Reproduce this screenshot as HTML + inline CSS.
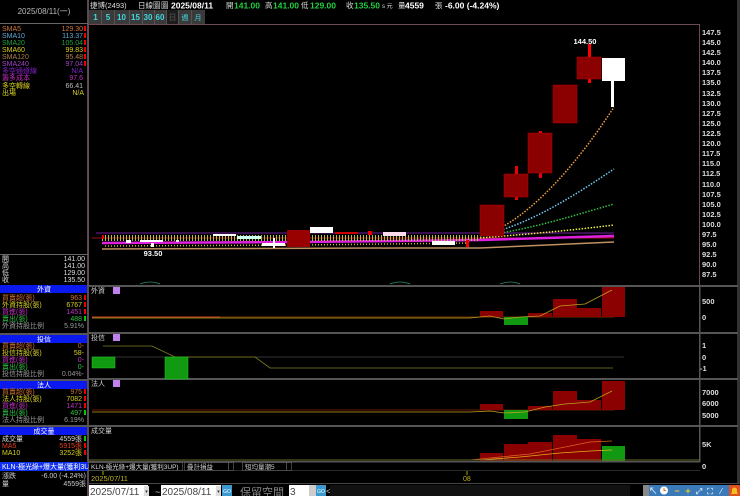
<!DOCTYPE html>
<html><head><meta charset="utf-8"><style>
html,body{margin:0;padding:0;background:#000;width:740px;height:496px;overflow:hidden}
svg{display:block}
text{font-family:"Liberation Sans","Noto Sans CJK TC",sans-serif}
</style></head><body>
<svg width="740" height="496" viewBox="0 0 740 496" xmlns="http://www.w3.org/2000/svg">
<rect width="740" height="496" fill="#000"/>
<!-- left panel separators -->
<rect x="87" y="0" width="2" height="496" fill="#5a4a55"/>
<rect x="0" y="23" width="88" height="1" fill="#666"/>
<text x="44" y="14" font-size="8" fill="#bbb" text-anchor="middle">2025/08/11(一)</text>
<g font-size="7">
<text x="2" y="31" fill="#d07838">SMA5</text><text x="83" y="31" fill="#d07838" text-anchor="end">129.30</text>
<text x="2" y="38" fill="#60a8d8">SMA10</text><text x="83" y="38" fill="#60a8d8" text-anchor="end">113.37</text>
<text x="2" y="45" fill="#20a040">SMA20</text><text x="83" y="45" fill="#20a040" text-anchor="end">105.04</text>
<text x="2" y="52" fill="#d8d020">SMA60</text><text x="83" y="52" fill="#d8d020" text-anchor="end">99.83</text>
<text x="2" y="59" fill="#b08050">SMA120</text><text x="83" y="59" fill="#b08050" text-anchor="end">95.48</text>
<text x="2" y="66" fill="#a040c8">SMA240</text><text x="83" y="66" fill="#a040c8" text-anchor="end">97.04</text>
<text x="2" y="73" fill="#8020c8">多空通道線</text><text x="83" y="73" fill="#8020c8" text-anchor="end">N/A</text>
<text x="2" y="80" fill="#c030c0">籌多成本</text><text x="83" y="80" fill="#c030c0" text-anchor="end">97.6</text>
<text x="2" y="88" fill="#d8d020">多空轉線</text><text x="83" y="88" fill="#bbb" text-anchor="end">66.41</text>
<text x="2" y="95" fill="#d8d020">出場</text><text x="84" y="95" fill="#d8d020" text-anchor="end">N/A</text>
</g>
<g fill="#e00"><rect x="84" y="26" width="2" height="5"/><rect x="84" y="33" width="2" height="5"/><rect x="84" y="40" width="2" height="5"/><rect x="84" y="47" width="2" height="5"/><rect x="84" y="54" width="2" height="5"/><rect x="84" y="61" width="2" height="5"/></g>
<rect x="0" y="254" width="88" height="1" fill="#666"/>
<g font-size="7" fill="#ddd">
<text x="2" y="261">開</text><text x="85" y="261" text-anchor="end">141.00</text>
<text x="2" y="268">高</text><text x="85" y="268" text-anchor="end">141.00</text>
<text x="2" y="275">低</text><text x="85" y="275" text-anchor="end">129.00</text>
<text x="2" y="282">收</text><text x="85" y="282" text-anchor="end">135.50</text>
</g>
<!-- 外資 -->
<rect x="0" y="285" width="87" height="8" fill="#0a1aee"/>
<text x="44" y="291.5" font-size="7" fill="#fff" text-anchor="middle">外資</text>
<g font-size="7">
<text x="2" y="300" fill="#d07030">買賣超(張)</text><text x="82" y="300" fill="#d07030" text-anchor="end">963</text>
<text x="2" y="307" fill="#d8d020">外資持股(張)</text><text x="82" y="307" fill="#d8d020" text-anchor="end">6767</text>
<text x="2" y="314" fill="#c030c0">買進(張)</text><text x="82" y="314" fill="#c030c0" text-anchor="end">1451</text>
<text x="2" y="321" fill="#30c040">賣出(張)</text><text x="82" y="321" fill="#30c040" text-anchor="end">488</text>
<text x="2" y="328" fill="#999">外資持股比例</text><text x="84" y="328" fill="#999" text-anchor="end">5.91%</text>
</g>
<rect x="0" y="333" width="88" height="2" fill="#555"/>
<rect x="0" y="335" width="87" height="8" fill="#0a1aee"/>
<text x="44" y="341.5" font-size="7" fill="#fff" text-anchor="middle">投信</text>
<g font-size="7">
<text x="2" y="348" fill="#d07030">買賣超(張)</text><text x="84" y="348" fill="#d07030" text-anchor="end">0-</text>
<text x="2" y="355" fill="#d8d020">投信持股(張)</text><text x="84" y="355" fill="#d8d020" text-anchor="end">58-</text>
<text x="2" y="362" fill="#c030c0">買進(張)</text><text x="84" y="362" fill="#c030c0" text-anchor="end">0-</text>
<text x="2" y="369" fill="#30c040">賣出(張)</text><text x="84" y="369" fill="#30c040" text-anchor="end">0-</text>
<text x="2" y="376" fill="#999">投信持股比例</text><text x="84" y="376" fill="#999" text-anchor="end">0.04%-</text>
</g>
<rect x="0" y="379" width="88" height="2" fill="#555"/>
<rect x="0" y="381" width="87" height="8" fill="#0a1aee"/>
<text x="44" y="387.5" font-size="7" fill="#fff" text-anchor="middle">法人</text>
<g font-size="7">
<text x="2" y="394" fill="#d07030">買賣超(張)</text><text x="82" y="394" fill="#d07030" text-anchor="end">975</text>
<text x="2" y="401" fill="#d8d020">法人持股(張)</text><text x="82" y="401" fill="#d8d020" text-anchor="end">7082</text>
<text x="2" y="408" fill="#c030c0">買進(張)</text><text x="82" y="408" fill="#c030c0" text-anchor="end">1471</text>
<text x="2" y="415" fill="#30c040">賣出(張)</text><text x="82" y="415" fill="#30c040" text-anchor="end">497</text>
<text x="2" y="422" fill="#999">法人持股比例</text><text x="84" y="422" fill="#999" text-anchor="end">6.19%</text>
</g>
<rect x="0" y="425" width="88" height="2" fill="#555"/>
<rect x="0" y="427" width="87" height="8" fill="#0a1aee"/>
<text x="44" y="433.5" font-size="7" fill="#fff" text-anchor="middle">成交量</text>
<g font-size="7">
<text x="2" y="441" fill="#ddd">成交量</text><text x="82" y="441" fill="#ddd" text-anchor="end">4559張</text>
<text x="2" y="448" fill="#e04020">MA5</text><text x="82" y="448" fill="#e04020" text-anchor="end">5915張</text>
<text x="2" y="455" fill="#d8d020">MA10</text><text x="82" y="455" fill="#d8d020" text-anchor="end">3252張</text>
</g>
<g fill="#e00"><rect x="84" y="295" width="2" height="5"/><rect x="84" y="302" width="2" height="5"/><rect x="84" y="309" width="2" height="5"/><rect x="84" y="389" width="2" height="5"/><rect x="84" y="396" width="2" height="5"/><rect x="84" y="403" width="2" height="5"/><rect x="84" y="443" width="2" height="5"/><rect x="84" y="450" width="2" height="5"/></g>
<g fill="#0c0"><rect x="84" y="316" width="2" height="5"/><rect x="84" y="410" width="2" height="5"/><rect x="84" y="436" width="2" height="5"/></g>
<rect x="0" y="462" width="88" height="9" fill="#1030ee"/>
<text x="2" y="469" font-size="7" fill="#fff">KLN-極光綠+爆大量(獲利3UP)</text>
<g font-size="7" fill="#ccc">
<text x="2" y="478">漲跌</text><text x="86" y="478" text-anchor="end">-6.00 (-4.24%)</text>
<text x="2" y="486">量</text><text x="86" y="486" text-anchor="end">4559張</text>
</g>

<!-- top header -->
<g font-size="7.5">
<text x="90" y="8" fill="#ddd">捷博(2493)</text>
<text x="138" y="8" fill="#ddd">日線圖</text>
<text x="161" y="8" fill="#ddd">圖</text>
<text x="171" y="8.5" fill="#fff" font-weight="bold" font-size="8.5">2025/08/11</text>
<text x="226" y="8" fill="#ddd">開</text><text x="234" y="8.5" fill="#20d040" font-weight="bold" font-size="8.5">141.00</text>
<text x="265" y="8" fill="#ddd">高</text><text x="273" y="8.5" fill="#20d040" font-weight="bold" font-size="8.5">141.00</text>
<text x="301" y="8" fill="#ddd">低</text><text x="310" y="8.5" fill="#20d040" font-weight="bold" font-size="8.5">129.00</text>
<text x="346" y="8" fill="#ddd">收</text><text x="354" y="8.5" fill="#20d040" font-weight="bold" font-size="8.5">135.50</text>
<text x="382" y="8" fill="#ddd" font-size="6">s 元</text>
<text x="398" y="8" fill="#ddd">量</text><text x="405" y="8.5" fill="#fff" font-weight="bold" font-size="8.5">4559</text>
<text x="435" y="8" fill="#ddd">張</text>
<text x="445" y="8.5" fill="#fff" font-weight="bold" font-size="8.5">-6.00 (-4.24%)</text>
</g>
<rect x="89" y="10" width="116" height="14" fill="#3a3a3a"/>
<g fill="#555"><rect x="101" y="10" width="1" height="14"/><rect x="114" y="10" width="1" height="14"/><rect x="129" y="10" width="1" height="14"/><rect x="142" y="10" width="1" height="14"/><rect x="154" y="10" width="1" height="14"/><rect x="166" y="10" width="1" height="14"/><rect x="178" y="10" width="1" height="14"/><rect x="191" y="10" width="1" height="14"/></g>
<rect x="167" y="10" width="11" height="14" fill="#1c1c1c"/>
<g font-size="8" fill="#40d8e0" font-weight="bold" text-anchor="middle">
<text x="95.5" y="20">1</text><text x="108" y="20">5</text><text x="121.5" y="20">10</text><text x="135.5" y="20">15</text><text x="148" y="20">30</text><text x="160" y="20">60</text><text x="172.5" y="20" fill="#444">日</text><text x="185" y="20" font-weight="normal" font-size="7">週</text><text x="198" y="20" font-weight="normal" font-size="7">月</text>
</g>

<!-- main chart border -->
<rect x="88.5" y="24.5" width="611" height="261" fill="none" stroke="#6a4a58" stroke-width="1"/>
<!-- right axis -->
<g font-size="7.5" fill="#ddd" font-weight="bold">
<text x="702" y="35">147.5</text><text x="702" y="45">145.0</text><text x="702" y="55">142.5</text><text x="702" y="65">140.0</text><text x="702" y="75">137.5</text><text x="702" y="85">135.0</text><text x="702" y="96">132.5</text><text x="702" y="106">130.0</text><text x="702" y="116">127.5</text><text x="702" y="126">125.0</text><text x="702" y="136">122.5</text><text x="702" y="146">120.0</text><text x="702" y="156">117.5</text><text x="702" y="166">115.0</text><text x="702" y="176">112.5</text><text x="702" y="187">110.0</text><text x="702" y="197">107.5</text><text x="702" y="207">105.0</text><text x="702" y="217">102.5</text><text x="702" y="227">100.0</text><text x="702" y="237">97.5</text><text x="702" y="247">95.0</text><text x="702" y="257">92.5</text><text x="702" y="267">90.0</text><text x="702" y="277">87.5</text>
</g>
<rect x="737" y="0" width="3" height="484" fill="#333"/>

<!-- MA lines main -->
<line x1="96" y1="233" x2="614" y2="233" stroke="#7020a0" stroke-width="1"/>
<line x1="92" y1="238" x2="614" y2="238" stroke="#a01010" stroke-width="1"/>
<path d="M102 243 L300 242 L480 240 L614 236" stroke="#e020e0" stroke-width="2.5" fill="none"/>
<path d="M102 249 L400 248 L480 248 L614 242" stroke="#c09060" stroke-width="1.5" fill="none"/>
<path d="M102 238 L480 238" stroke="#b0c040" stroke-width="6" stroke-dasharray="1 2" fill="none"/>
<path d="M105 246 L300 245 L470 243" stroke="#d8c020" stroke-width="1.5" stroke-dasharray="1 2" fill="none"/>
<path d="M480 236 C520 226 570 175 614 107" stroke="#f0a040" stroke-width="1.5" stroke-dasharray="1.5 1.5" fill="none"/>
<path d="M480 236 C530 225 575 195 614 169" stroke="#70c8f0" stroke-width="1.5" stroke-dasharray="1.5 1.5" fill="none"/>
<path d="M480 236 C530 230 575 215 614 204" stroke="#30c040" stroke-width="1.5" stroke-dasharray="1.5 1.5" fill="none"/>
<path d="M480 238 C530 234 575 230 614 225" stroke="#f0f040" stroke-width="1.5" stroke-dasharray="1.5 1.5" fill="none"/>

<!-- candles -->
<g>
<rect x="102" y="235" width="2" height="4" fill="#e00"/>
<rect x="126" y="240" width="5" height="3" fill="#fff"/>
<rect x="140" y="240" width="23" height="2" fill="#fff"/>
<rect x="151" y="243" width="3" height="4" fill="#fff"/>
<rect x="176" y="240" width="3" height="2" fill="#eee"/>
<rect x="213" y="234" width="23" height="2" fill="#fff"/>
<rect x="237" y="236" width="24" height="3" fill="#cfe"/>
<rect x="262" y="243" width="23" height="3" fill="#fff"/>
<rect x="273" y="238" width="2" height="10" fill="#fff"/>
<rect x="287" y="230" width="23" height="17" fill="#900"/>
<rect x="310" y="227" width="23" height="6" fill="#fff"/>
<rect x="335" y="232" width="23" height="2" fill="#c00"/>
<rect x="368" y="231" width="4" height="4" fill="#e00"/>
<rect x="383" y="232" width="23" height="4" fill="#fde"/>
<rect x="432" y="241" width="23" height="4" fill="#fff"/>
<rect x="466" y="240" width="3" height="7" fill="#e00"/>
<rect x="480" y="205" width="24" height="31" fill="#8b0000" stroke="#b00" stroke-width="0.5"/>
<rect x="515" y="166" width="3" height="34" fill="#e00"/>
<rect x="504" y="174" width="24" height="23" fill="#8b0000" stroke="#b00" stroke-width="0.5"/>
<rect x="539" y="131" width="3" height="47" fill="#e00"/>
<rect x="528" y="133" width="24" height="40" fill="#8b0000" stroke="#b00" stroke-width="0.5"/>
<rect x="553" y="85" width="24" height="38" fill="#8b0000" stroke="#b00" stroke-width="0.5"/>
<rect x="588" y="44" width="3" height="39" fill="#f00"/>
<rect x="577" y="57" width="24" height="22" fill="#8b0000" stroke="#b00" stroke-width="0.5"/>
<rect x="611" y="80" width="3" height="27" fill="#fff"/>
<rect x="602" y="58" width="23" height="23" fill="#fff"/>
</g>
<text x="585" y="44" font-size="7.5" fill="#fff" font-weight="bold" text-anchor="middle">144.50</text>
<text x="153" y="256" font-size="7.5" fill="#fff" font-weight="bold" text-anchor="middle">93.50</text>
<path d="M140 284 Q150 280 160 284 M390 284 Q400 280 410 284 M500 284 Q510 280 520 284" stroke="#2a8a60" fill="none" stroke-width="0.8"/>

<!-- panel separators -->
<g fill="#555">
<rect x="88" y="285" width="650" height="2"/>
<rect x="88" y="332" width="650" height="2"/>
<rect x="88" y="378" width="650" height="2"/>
<rect x="88" y="425" width="650" height="2"/>
<rect x="88" y="461" width="612" height="1.5"/>
</g>
<rect x="699" y="285" width="1.5" height="177" fill="#555"/>

<!-- 外資 panel -->
<text x="91" y="293" font-size="7" fill="#ccc">外資</text>
<rect x="113" y="287" width="7" height="7" fill="#c080f0"/>
<line x1="92" y1="317" x2="614" y2="317" stroke="#8b4000" stroke-width="0.8"/>
<g fill="#8b0000"><rect x="480" y="311" width="23" height="6"/><rect x="528" y="313" width="24" height="4"/><rect x="553" y="299" width="24" height="18"/><rect x="577" y="308" width="24" height="9"/><rect x="602" y="287" width="23" height="30"/></g>
<rect x="504" y="317" width="24" height="8" fill="#119911"/>
<path d="M92 318 L470 318 L490 316 L504 319 L520 317 L540 316 L560 306 L585 304 L612 290" stroke="#c0a020" fill="none" stroke-width="0.8"/>
<line x1="92" y1="317" x2="220" y2="317" stroke="#d04020" stroke-width="1"/>
<g font-size="7.5" fill="#ddd" font-weight="bold"><text x="702" y="304">500</text><text x="702" y="320">0</text></g>

<!-- 投信 panel -->
<text x="91" y="340" font-size="7" fill="#ccc">投信</text>
<rect x="113" y="334" width="7" height="7" fill="#c080f0"/>
<line x1="92" y1="357" x2="624" y2="357" stroke="#333" stroke-width="1"/>
<path d="M103 346 L152 346 L175 357 L255 357 L270 368 L613 368" stroke="#808020" fill="none" stroke-width="0.8"/>
<rect x="92" y="357" width="23" height="11" fill="#119911" stroke="#2c2" stroke-width="0.5"/>
<rect x="165" y="357" width="23" height="22" fill="#119911" stroke="#2c2" stroke-width="0.5"/>
<g font-size="7.5" fill="#ddd" font-weight="bold"><text x="702" y="348">1</text><text x="702" y="360">0</text><text x="700" y="371">-1</text></g>

<!-- 法人 panel -->
<text x="91" y="386" font-size="7" fill="#ccc">法人</text>
<rect x="113" y="380" width="7" height="7" fill="#c080f0"/>
<line x1="92" y1="410" x2="614" y2="410" stroke="#8b2000" stroke-width="0.8"/>
<g fill="#8b0000"><rect x="480" y="404" width="23" height="6"/><rect x="528" y="406" width="24" height="4"/><rect x="553" y="391" width="24" height="19"/><rect x="577" y="400" width="24" height="10"/><rect x="602" y="381" width="23" height="29"/></g>
<rect x="504" y="410" width="24" height="9" fill="#119911"/>
<path d="M92 412 L470 412 L490 411 L504 413 L525 412 L545 407 L565 404 L590 402 L612 391" stroke="#c0a020" fill="none" stroke-width="0.8"/>
<g font-size="7.5" fill="#ddd" font-weight="bold"><text x="702" y="395">7000</text><text x="702" y="406">6000</text><text x="702" y="418">5000</text></g>

<!-- 成交量 panel -->
<text x="91" y="433" font-size="7" fill="#ccc">成交量</text>
<g fill="#8b0000"><rect x="480" y="453" width="23" height="8"/><rect x="504" y="444" width="24" height="17"/><rect x="528" y="442" width="24" height="19"/><rect x="553" y="435" width="24" height="26"/><rect x="577" y="439" width="24" height="22"/></g>
<rect x="602" y="446" width="23" height="15" fill="#119911"/>
<path d="M92 460 L470 460 L500 457 L530 454 L560 448 L590 442 L612 441" stroke="#e06020" fill="none" stroke-width="0.8"/>
<path d="M92 460 L480 460 L520 457 L560 453 L590 451 L612 450" stroke="#e0b020" fill="none" stroke-width="0.8"/>
<line x1="88" y1="460" x2="700" y2="460" stroke="#6a6a30" stroke-width="1"/>
<g font-size="7.5" fill="#ddd" font-weight="bold"><text x="702" y="447">5K</text><text x="702" y="469">0</text></g>

<!-- KLN row -->
<rect x="88.5" y="462.5" width="94" height="8" fill="#000" stroke="#666" stroke-width="0.6"/>
<text x="91" y="469" font-size="6.5" fill="#ddd">KLN-極光綠+爆大量(獲利3UP)</text>
<rect x="184.5" y="462.5" width="44" height="8" fill="#000" stroke="#666" stroke-width="0.6"/>
<text x="187" y="469" font-size="6.5" fill="#ccc">疊計損益</text>
<rect x="228.5" y="462.5" width="5" height="8" fill="#000" stroke="#666" stroke-width="0.6"/>
<rect x="242.5" y="462.5" width="44" height="8" fill="#000" stroke="#666" stroke-width="0.6"/>
<text x="245" y="469" font-size="6.5" fill="#ccc">短均量潮5</text>
<rect x="286.5" y="462.5" width="5" height="8" fill="#000" stroke="#666" stroke-width="0.6"/>
<line x1="88" y1="470.5" x2="700" y2="470.5" stroke="#555" stroke-width="0.6"/>

<!-- date axis -->
<line x1="103" y1="471" x2="103" y2="475" stroke="#aa0"/>
<line x1="467" y1="471" x2="467" y2="475" stroke="#aa0"/>
<text x="91" y="481" font-size="7.5" fill="#c0b020">2025/07/11</text>
<text x="463" y="481" font-size="7" fill="#c0b020">08</text>
<rect x="88" y="483" width="652" height="1" fill="#444"/>

<!-- bottom controls -->
<rect x="89" y="485" width="59" height="11" fill="#fff"/>
<text x="90" y="495" font-size="10" fill="#444">2025/07/11</text>
<rect x="144" y="486" width="5" height="10" fill="#ddd"/>
<text x="146.5" y="493" font-size="5" fill="#333" text-anchor="middle">▾</text>
<text x="155" y="495" font-size="9" fill="#ccc">~</text>
<rect x="161" y="485" width="60" height="11" fill="#fff"/>
<text x="162" y="495" font-size="10" fill="#444">2025/08/11</text>
<rect x="216" y="486" width="5" height="10" fill="#ddd"/>
<text x="218.5" y="493" font-size="5" fill="#333" text-anchor="middle">▾</text>
<rect x="222" y="485" width="10" height="11" fill="#3a9ad0"/>
<text x="227" y="493" font-size="5" fill="#fff" text-anchor="middle">GO</text>
<text x="240" y="496" font-size="11" fill="#888">保留空間</text>
<rect x="289" y="485" width="20" height="11" fill="#fff"/>
<text x="290" y="495" font-size="10" fill="#444">3</text>
<rect x="309" y="485" width="7" height="11" fill="#ccc"/>
<rect x="316" y="485" width="10" height="11" fill="#3a9ad0"/>
<text x="321" y="493" font-size="5" fill="#fff" text-anchor="middle">GO</text>
<text x="326" y="494" font-size="8" fill="#ccc">&lt;</text>
<rect x="330" y="485" width="300" height="11" fill="#111"/>
<!-- toolbar -->
<rect x="643" y="485" width="97" height="11" fill="#3a7ab8"/>
<rect x="643" y="485" width="6" height="11" fill="#888"/>
<g font-size="9" font-weight="bold" text-anchor="middle">
<text x="653" y="494" fill="#cde">↖</text>
<circle cx="664" cy="490.5" r="4" fill="#fff"/><path d="M664 488 V490.5 H666" stroke="#e07020" fill="none"/>
<text x="677" y="494" fill="#f0d020">−</text>
<text x="688" y="494" fill="#f0d020">+</text>
<text x="699" y="494" fill="#cde" font-size="8">⤢</text>
<text x="710" y="494" fill="#cde" font-size="8">⛶</text>
<text x="721" y="494" fill="#cde" font-size="8">⁄</text>
</g>
<rect x="729" y="485" width="11" height="11" fill="#e05020"/>
<path d="M731 494 H738 L737 492 V489 Q734.5 486 732 489 V492 Z" fill="#f0c020"/>
</svg>
</body></html>
